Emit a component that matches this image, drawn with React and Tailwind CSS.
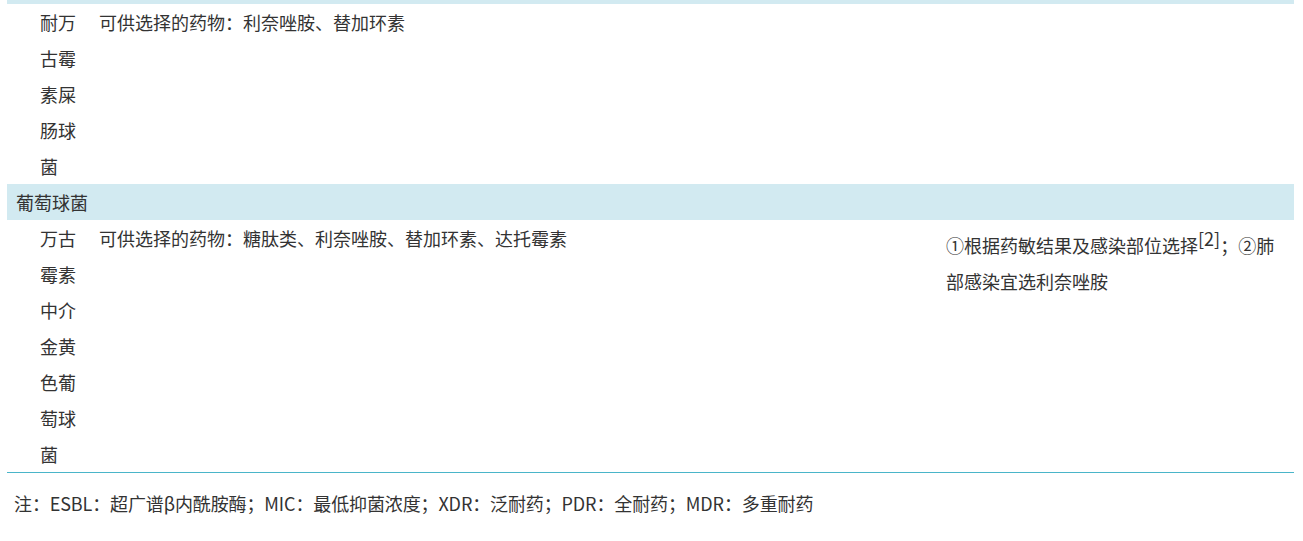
export default function App() {
  const font = { fontFamily: '"Noto Sans CJK SC", "Noto Sans", sans-serif' };
  const Col1 = ({ text }) => (
    <div className="w-[59px] shrink-0 pl-[9px]">
      <div className="w-[36px] break-all">{text}</div>
    </div>
  );
  return (
    <div className="w-[1303px] h-[541px] bg-white text-[18px] leading-[36px] text-[#333]" style={font}>
      <div className="mx-[7px] w-[1287px]">
        <div className="h-[4px] bg-[#d2eaf1]" />
        <div className="flex">
          <div className="w-[24px] shrink-0" />
          <Col1 text="耐万古霉素屎肠球菌" />
          <div className="w-[847px] shrink-0 pl-[9px]">可供选择的药物：利奈唑胺、替加环素</div>
          <div className="flex-1 px-[9px]" />
        </div>
        <div className="h-[36px] bg-[#d2eaf1] pl-[9px]">葡萄球菌</div>
        <div className="flex border-b border-[#4ab5c9]">
          <div className="w-[24px] shrink-0" />
          <Col1 text="万古霉素中介金黄色葡萄球菌" />
          <div className="w-[847px] shrink-0 pl-[9px]">可供选择的药物：糖肽类、利奈唑胺、替加环素、达托霉素</div>
          <div className="flex-1 px-[9px] pt-[7px]">
            ①根据药敏结果及感染部位选择<span className="align-super text-[18px] leading-none">[2]</span>；②肺部感染宜选利奈唑胺
          </div>
        </div>
        <div className="pt-[12px]">
          <p className="pl-[7px] tracking-[-0.12px]">注：ESBL：超广谱β内酰胺酶；MIC：最低抑菌浓度；XDR：泛耐药；PDR：全耐药；MDR：多重耐药</p>
        </div>
      </div>
    </div>
  );
}
